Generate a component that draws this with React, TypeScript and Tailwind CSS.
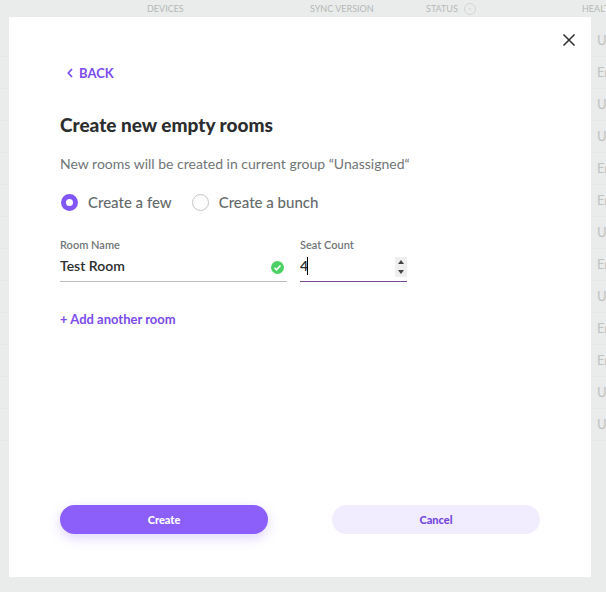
import { useState } from "react";

const healthRows = [
  "Unknown", "Error", "Unknown", "Unknown", "Error", "Error", "Unknown",
  "Error", "Unknown", "Error", "Error", "Unknown", "Unknown",
];

function RoomsTable() {
  return (
    <div className="absolute inset-0 overflow-hidden" aria-hidden="true">
      <table className="w-[720px] table-fixed border-collapse text-left text-[#bfc2c1]">
        <colgroup>
          <col className="w-[147px]" />
          <col className="w-[163px]" />
          <col className="w-[116px]" />
          <col className="w-[156px]" />
          <col />
        </colgroup>
        <thead>
          <tr className="h-6 align-top text-[9px] leading-[18px] whitespace-nowrap text-[#b5b8b7]">
            <th></th>
            <th className="font-normal">DEVICES</th>
            <th className="font-normal">SYNC VERSION</th>
            <th className="font-normal">
              <span className="flex items-center gap-1.5">
                STATUS
                <svg viewBox="0 0 12 12" className="size-3" fill="none" stroke="#d3d6d5">
                  <circle cx="6" cy="6" r="5.5" />
                  <path d="M6 5.3v1.4" stroke="#bfc2c1" />
                </svg>
              </span>
            </th>
            <th className="font-normal">HEALTH</th>
          </tr>
        </thead>
        <tbody>
          {healthRows.map((health, i) => (
            <tr key={i} className="h-8 border-b border-[#e5e8e7] text-[13px] leading-4">
              <td colSpan={4}></td>
              <td className="pl-[15px]">{health}</td>
            </tr>
          ))}
        </tbody>
      </table>
    </div>
  );
}

function ModeRadio({ label, checked, onChange }: { label: string; checked: boolean; onChange: () => void }) {
  return (
    <label className="flex items-center gap-2.5 text-[15px] leading-5 font-medium text-[#646a6b]">
      <input
        type="radio"
        name="mode"
        checked={checked}
        onChange={onChange}
        className="size-[17px] appearance-none rounded-full border border-[#c3c5c6] checked:border-[5px] checked:border-[#8257f5]"
      />
      {label}
    </label>
  );
}

export default function App() {
  const [mode, setMode] = useState("few");
  const [name, setName] = useState("Test Room");
  const [seats, setSeats] = useState(4);

  return (
    <main className="relative flex min-h-screen bg-[#e9eceb] pt-[17px] pr-[15px] pb-[15px] pl-[9px] font-['Lato',sans-serif]">
      <RoomsTable />

      <div role="dialog" aria-labelledby="title" className="relative flex flex-1 flex-col bg-white px-[51px] pb-[43px]">
        <button aria-label="Close" className="absolute top-4 right-[15px] text-[#2a2c2d]">
          <svg viewBox="0 0 14 14" className="size-3.5" fill="none" stroke="currentColor" strokeWidth="1.5">
            <path d="M1.5 1.5l11 11M12.5 1.5l-11 11" />
          </svg>
        </button>

        <button className="mt-[46px] flex items-center gap-1.5 self-start pl-[7px] text-[13px] leading-5 font-bold text-[#7b4bea]">
          <svg viewBox="0 0 6 10" className="h-2.5 w-1.5" fill="none" stroke="currentColor" strokeWidth="1.7">
            <path d="M5 1L1.3 5L5 9" />
          </svg>
          BACK
        </button>

        <h1 id="title" className="mt-[30px] text-[19px] leading-6 font-black text-[#2b2d2e]">
          Create new empty rooms
        </h1>
        <p className="mt-[17px] text-[14px] leading-5 text-[#707677]">
          New rooms will be created in current group “Unassigned“
        </p>

        <div className="mt-[18px] flex items-center gap-5 pl-px">
          <ModeRadio label="Create a few" checked={mode === "few"} onChange={() => setMode("few")} />
          <ModeRadio label="Create a bunch" checked={mode === "bunch"} onChange={() => setMode("bunch")} />
        </div>

        <div className="mt-[25px] flex gap-[13px]">
          <div className="w-[227px]">
            <label htmlFor="room" className="block text-[11px] leading-4 font-semibold text-[#707677]">Room Name</label>
            <div className="flex h-[29px] items-center border-b border-[#bcbcbe] pr-[3px]">
              <input
                id="room"
                value={name}
                onChange={(e) => setName(e.target.value)}
                className="min-w-0 flex-1 pb-0.5 text-[14px] leading-5 font-semibold text-[#2b2d2e] outline-none"
              />
              <svg viewBox="0 0 13 13" className="size-[13px]" fill="none">
                <circle cx="6.5" cy="6.5" r="6.5" fill="#4ed164" />
                <path d="M3.5 6.8l2 2l4-4.3" stroke="#fff" strokeWidth="1.6" />
              </svg>
            </div>
          </div>

          <div className="w-[107px]">
            <label htmlFor="seats" className="block text-[11px] leading-4 font-semibold text-[#707677]">Seat Count</label>
            <div className="relative flex h-[29px] items-center border-b border-[#7a4a96]">
              <input
                id="seats"
                type="number"
                value={seats}
                onChange={(e) => setSeats(Number(e.target.value))}
                className="min-w-0 flex-1 [appearance:textfield] pb-0.5 text-[14px] leading-5 font-semibold text-[#2b2d2e] caret-transparent outline-none"
              />
              <span className="absolute top-1 left-[7px] h-[18px] w-px bg-black" />
              <div className="flex h-5 w-3 flex-col bg-[#efefef] text-[#444]">
                <button aria-label="Increase" onClick={() => setSeats(seats + 1)} className="flex flex-1 items-center justify-center">
                  <svg viewBox="0 0 6 4" className="h-1 w-1.5" fill="currentColor"><path d="M0 4L3 0L6 4Z" /></svg>
                </button>
                <button aria-label="Decrease" onClick={() => setSeats(seats - 1)} className="flex flex-1 items-center justify-center">
                  <svg viewBox="0 0 6 4" className="h-1 w-1.5" fill="currentColor"><path d="M0 0L3 4L6 0Z" /></svg>
                </button>
              </div>
            </div>
          </div>
        </div>

        <button className="mt-[27px] self-start text-[13px] leading-5 font-bold text-[#7b4bea]">
          + Add another room
        </button>

        <div className="mt-auto grid grid-cols-2 gap-16 text-[11px] leading-4 font-black">
          <button className="h-[29px] rounded-full bg-[#8c5ffb] text-white shadow-[0_4px_12px_rgba(130,87,245,0.25)]">Create</button>
          <button className="h-[29px] rounded-full bg-[#f2ecff] text-[#7446e0]">Cancel</button>
        </div>
      </div>
    </main>
  );
}
